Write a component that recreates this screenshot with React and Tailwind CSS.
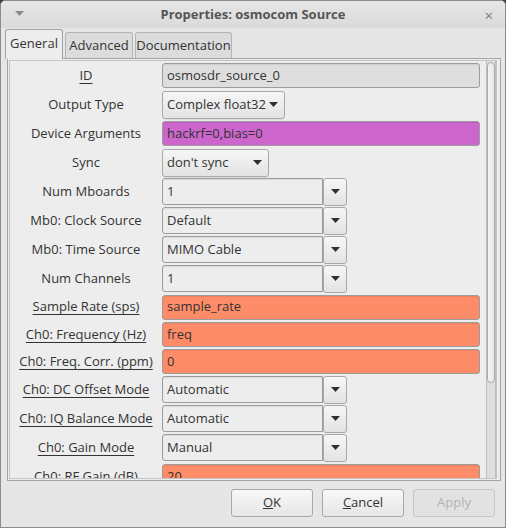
import React from "react";

const FLOAT = "bg-[#ff8c69]";
const STRING = "bg-[#cc66cc]";

// h: row height, measured from the dialog
const rows = [
  { label: "ID", kind: "entry", value: "osmosdr_source_0", bg: "bg-[#dedede]", u: true, h: "h-[29px]" },
  { label: "Output Type", kind: "combo", value: "Complex float32", w: "w-[123px]", h: "h-[29px]" },
  { label: "Device Arguments", kind: "entry", value: "hackrf=0,bias=0", bg: STRING, h: "h-[29px]" },
  { label: "Sync", kind: "combo", value: "don't sync", w: "w-[107px]", h: "h-[29px]" },
  { label: "Num Mboards", kind: "comboEntry", value: "1", h: "h-[29px]" },
  { label: "Mb0: Clock Source", kind: "comboEntry", value: "Default", h: "h-[29px]" },
  { label: "Mb0: Time Source", kind: "comboEntry", value: "MIMO Cable", h: "h-[29px]" },
  { label: "Num Channels", kind: "comboEntry", value: "1", h: "h-[29px]" },
  { label: "Sample Rate (sps)", kind: "entry", value: "sample_rate", bg: FLOAT, u: true, h: "h-[28px]" },
  { label: "Ch0: Frequency (Hz)", kind: "entry", value: "freq", bg: FLOAT, u: true, h: "h-[27px]" },
  { label: "Ch0: Freq. Corr. (ppm)", kind: "entry", value: "0", bg: FLOAT, u: true, h: "h-[27px]" },
  { label: "Ch0: DC Offset Mode", kind: "comboEntry", value: "Automatic", u: true, h: "h-[29px]" },
  { label: "Ch0: IQ Balance Mode", kind: "comboEntry", value: "Automatic", u: true, h: "h-[29px]" },
  { label: "Ch0: Gain Mode", kind: "comboEntry", value: "Manual", u: true, h: "h-[29px]" },
  { label: "Ch0: RF Gain (dB)", kind: "entry", value: "20", bg: FLOAT, u: true, h: "h-[29px]" },
];

function Arrow() {
  return (
    <svg width="9" height="5" viewBox="0 0 9 5" className="shrink-0">
      <path d="M0 0 H9 L4.5 5 Z" fill="#2f2f2f" />
    </svg>
  );
}

function Field({ row }) {
  if (row.kind === "entry") {
    return (
      <div
        className={`flex h-[25px] w-[318px] items-center rounded-[3px] border border-[#9c9c9c] pl-[4px] shadow-[inset_0_1px_1px_rgba(0,0,0,0.08)] ${row.bg}`}
      >
        {row.value}
      </div>
    );
  }
  if (row.kind === "combo") {
    return (
      <div
        className={`flex h-[28px] items-center justify-between rounded-[3px] border border-[#a8a8a8] bg-gradient-to-b from-[#f6f6f6] to-[#e3e3e3] pl-[4px] pr-[6px] shadow-[0_1px_0_rgba(0,0,0,0.06)] ${row.w}`}
      >
        <span>{row.value}</span>
        <Arrow />
      </div>
    );
  }
  return (
    <div className="flex items-center">
      <div className="flex h-[27px] w-[161px] items-center rounded-l-[3px] border border-[#9c9c9c] bg-[#ededed] pl-[4px] shadow-[inset_0_1px_1px_rgba(0,0,0,0.08)]">
        {row.value}
      </div>
      <div className="flex h-[28px] w-[24px] items-center justify-center rounded-[3px] border border-[#a8a8a8] bg-gradient-to-b from-[#f6f6f6] to-[#e3e3e3]">
        <Arrow />
      </div>
    </div>
  );
}

function Button({ children, disabled }) {
  return (
    <button
      type="button"
      className={
        disabled
          ? "h-[28px] w-[82px] rounded-[3px] border border-[#c6c6c6] bg-[#e2e2e2] text-[#b3b3b3]"
          : "h-[28px] w-[82px] rounded-[3px] border border-[#a9a9a9] bg-gradient-to-b from-[#f8f8f8] to-[#e6e6e6] text-[#333]"
      }
    >
      {children}
    </button>
  );
}

export default function App() {
  return (
    <div
      className="h-[528px] w-[506px] bg-[#3a3a3a] text-[13px] text-[#333]"
      style={{ fontFamily: '"Open Sans", "Noto Sans", sans-serif' }}
    >
      <div className="flex h-full flex-col rounded-t-[5px] border border-[#8c8c8c] bg-[#e6e6e6]">
        {/* title bar */}
        <div className="relative flex h-[27px] shrink-0 items-center justify-center rounded-t-[5px] bg-gradient-to-b from-[#e6e6e6] to-[#dadada]">
          <svg width="9" height="5" viewBox="0 0 9 5" className="absolute left-[14px] top-[10px]">
            <path d="M0 0 H9 L4.5 5 Z" fill="#8a8a8a" />
          </svg>
          <span className="font-bold text-[#555]">Properties: osmocom Source</span>
          <span className="absolute right-[12px] top-[3px] text-[15px] text-[#7a7a7a]">×</span>
        </div>

        {/* tabs */}
        <div className="flex h-[30px] shrink-0 items-end gap-[2px] pl-[4px]">
          <div className="relative z-10 -mb-px flex h-[30px] w-[58px] items-center justify-center rounded-t-[3px] border border-b-0 border-[#a3a3a3] bg-[#ededed] pb-[1px]">
            General
          </div>
          <div className="flex h-[26px] w-[68px] items-center justify-center rounded-t-[3px] border border-b-0 border-[#b4b4b4] bg-[#dcdcdc]">
            Advanced
          </div>
          <div className="flex h-[26px] w-[97px] items-center justify-center rounded-t-[3px] border border-b-0 border-[#b4b4b4] bg-[#dcdcdc]">
            Documentation
          </div>
        </div>

        {/* notebook page */}
        <div className="ml-[6px] mr-[4px] h-[423px] shrink-0 border border-[#a3a3a3] bg-[#ededed] py-[1px] pl-[1px] pr-[3px]">
          <div className="flex h-full border border-[#c4c4c4]">
            <div className="flex-1 overflow-hidden">
              {rows.map((row) => (
                <div key={row.label} className={`flex shrink-0 items-center ${row.h}`}>
                  <div className="w-[152px] shrink-0 text-center">
                    <span className={row.u ? "underline decoration-1 underline-offset-[3px]" : ""}>
                      {row.label}
                    </span>
                  </div>
                  <Field row={row} />
                </div>
              ))}
            </div>
            <div className="w-[10px] shrink-0 border-x border-[#bdbdbd] bg-[#dedede]">
              <div className="mt-[1px] h-[321px] rounded-full border border-[#ababab] bg-gradient-to-r from-[#f4f4f4] to-[#e6e6e6]" />
            </div>
          </div>
        </div>

        {/* buttons */}
        <div className="flex flex-1 justify-end gap-[9px] pr-[10px] pt-[8px]">
          <Button>
            <span className="underline">O</span>K
          </Button>
          <Button>
            <span className="underline">C</span>ancel
          </Button>
          <Button disabled>Apply</Button>
        </div>
      </div>
    </div>
  );
}
